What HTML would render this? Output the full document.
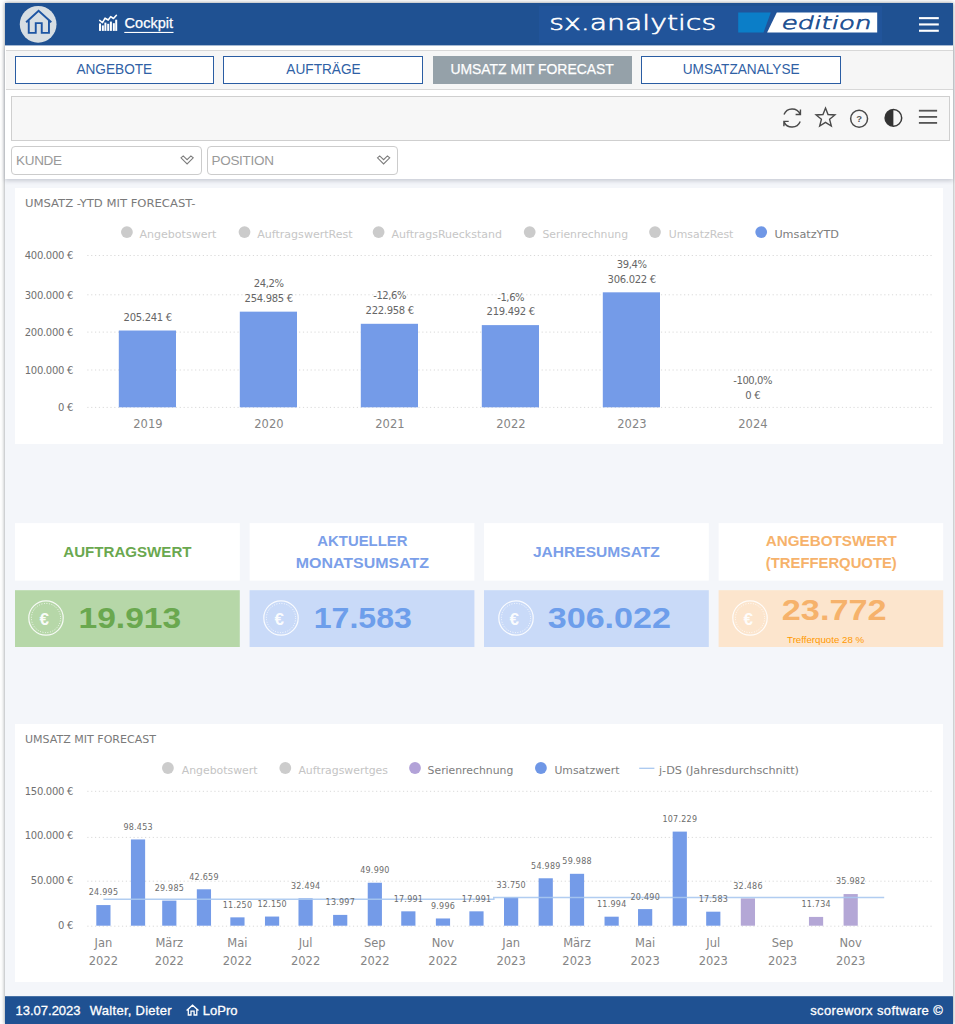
<!DOCTYPE html>
<html lang="de"><head><meta charset="utf-8"><title>sx.analytics – Cockpit</title>
<style>
*{box-sizing:border-box;margin:0;padding:0}
html,body{width:955px;height:1024px;overflow:hidden;background:#fff;font-family:"Liberation Sans",sans-serif}
#app{position:absolute;left:5px;top:3px;width:948px;height:1021px;background:#f4f6fa;box-shadow:0 0 4px 0 rgba(40,50,60,.55)}
.abs{position:absolute}
#page{position:absolute;left:0;top:0;width:955px;height:1024px}
header{position:absolute;left:5px;top:3px;width:948px;height:42px;background:#1f5192}
#top{position:absolute;left:5px;top:45px;width:948px;height:134px;background:#fff;box-shadow:0 2px 4px rgba(60,70,90,.23)}
#tabs{position:absolute;left:6px;top:50px;width:947px;height:40px;background:#f6f6f6;border-top:1px solid #d8d8d8;border-bottom:1px solid #d8d8d8}
.tab{position:absolute;top:56px;height:28px;border:1px solid #2a5da3;background:#fff;color:#2f61a5;font-size:14.5px;line-height:24.6px;text-align:center;text-decoration:none;white-space:nowrap}
.tab span{display:inline-block;transform:scaleX(.94)}
.tab.act{background:#95a1a9;border-color:#95a1a9;color:#fff}
.tab.act span{transform:scaleX(.96);-webkit-text-stroke:.25px #fff}
#tools{position:absolute;left:11px;top:96px;width:939px;height:45px;background:#f7f7f7;border:1px solid #cfcfcf}
.sel{position:absolute;top:146px;height:29px;border:1px solid #ccc;border-radius:4px;background:#fff;color:#999;font-size:13.5px;letter-spacing:-.3px;line-height:28px;padding-left:4px}
.card{position:absolute;left:15px;width:928px;background:#fff}
.chart{display:block}
.tt{position:absolute;top:523px;height:57px}
.tv{position:absolute;top:590.2px;height:56.8px}
.euro{position:absolute}
footer{position:absolute;left:5px;top:997px;width:948px;height:27px;background:#1f5192;color:#fff;font-size:13px;line-height:28.6px;-webkit-text-stroke:.3px #fff}
footer span{position:absolute;top:0;white-space:nowrap}
</style></head>
<body>
<div id="app"></div>
<div id="page">
<div id="top"></div>
<header></header>
<svg class="abs" style="left:5px;top:3px" width="948" height="43" viewBox="5 3 948 43">
<rect x="5" y="3" width="947.9" height="42.4" fill="#1f5192"/>
<rect x="539" y="6" width="343" height="37" fill="#21549a"/>
<circle cx="38.15" cy="24.3" r="18.35" fill="#d7dee3"/>
<path d="M26.1 22.3 L38.6 10.7 L51.3 22.3 M28.75 20.2 V32.85 H35.75 V23.15 H41.75 V32.85 H48.95 V20.2" fill="none" stroke="#1d55a3" stroke-width="1.9" stroke-linejoin="miter"/>
<g fill="#fff"><rect x="99" y="23.5" width="2" height="7.4"/><rect x="101.85" y="25.4" width="2" height="5.5"/><rect x="104.4" y="22.6" width="2" height="8.3"/><rect x="107.2" y="23.8" width="2" height="7.1"/><rect x="109.9" y="21.6" width="2" height="9.3"/><rect x="112.85" y="23.2" width="2" height="7.7"/><rect x="115.2" y="19.7" width="2" height="11.2"/></g>
<path d="M99.7 20.4 L102.5 22.6 L105.05 18.2 L108.2 20.05 L110.7 16.6 L113.5 18.5 L116.4 15.3" fill="none" stroke="#fff" stroke-width="1.6" stroke-linejoin="round" stroke-linecap="round"/>
<text x="124.5" y="27.6" font-family='"Liberation Sans", sans-serif' font-size="14.5" fill="#fff" stroke="#fff" stroke-width=".25" textLength="48.6" lengthAdjust="spacing">Cockpit</text>
<rect x="124.3" y="31.9" width="49.2" height="1.1" fill="#fff"/>
<text x="549.2" y="30.2" font-family='"DejaVu Sans Light", "DejaVu Sans", "Liberation Sans", sans-serif' font-weight="200" font-size="22" fill="#fff" stroke="#fff" stroke-width=".6" textLength="167" lengthAdjust="spacingAndGlyphs">sx.analytics</text>
<polygon points="738.2,12.6 770.8,12.6 763.5,32.6 738.2,32.6" fill="#0b7ec8"/>
<polygon points="776.8,12.6 877.2,12.6 877.2,32.6 767.1,32.6" fill="#fff"/>
<text x="781.6" y="29" font-family='"DejaVu Sans Light", "DejaVu Sans", "Liberation Sans", sans-serif' font-weight="200" font-size="17.6" fill="#1f5192" stroke="#1f5192" stroke-width=".7" textLength="90" lengthAdjust="spacingAndGlyphs" transform="translate(780.4,29) skewX(-14) translate(-781.6,-29)">edition</text>
<g fill="#fff"><rect x="919" y="17.1" width="19.8" height="2.1"/><rect x="919" y="23.4" width="19.8" height="2.1"/><rect x="919" y="29.7" width="19.8" height="2.1"/></g>
</svg>
<nav id="tabs"></nav>
<a class="tab" style="left:15px;width:199px"><span>ANGEBOTE</span></a>
<a class="tab" style="left:223px;width:200px"><span>AUFTRÄGE</span></a>
<a class="tab act" style="left:433px;width:199px"><span>UMSATZ MIT FORECAST</span></a>
<a class="tab" style="left:641px;width:200px"><span>UMSATZANALYSE</span></a>
<div id="tools"></div>
<svg class="abs" style="left:775px;top:100px" width="170" height="36" viewBox="775 100 170 36" fill="none" stroke="#4a4a4a" stroke-width="1.4">
<path d="M784.0 114.5 A8.8 8.8 0 0 1 800.2 114.2 M800.45 109.6 V114.45 H795.6 M800.2 121.4 A8.8 8.8 0 0 1 784.0 121.9 M783.9 126.2 V121.4 H788.7" stroke-linecap="butt"/>
<polygon points="825.50,108.10 828.03,114.52 834.92,114.94 829.59,119.33 831.32,126.01 825.50,122.30 819.68,126.01 821.41,119.33 816.08,114.94 822.97,114.52" stroke-linejoin="miter"/>
<circle cx="859.1" cy="118.8" r="8.45" stroke-width="1.5"/>
<text x="859.1" y="122.2" text-anchor="middle" font-family='"Liberation Sans", sans-serif' font-weight="bold" font-size="9.5" fill="#555" stroke="none">?</text>
<circle cx="893.4" cy="117.9" r="8.3" stroke="#3a3a3a" stroke-width="1.5"/>
<path d="M893.4 109.6 A8.3 8.3 0 0 0 893.4 126.2 Z" fill="#333" stroke="none"/>
<g fill="#555" stroke="none"><rect x="918.9" y="109.8" width="18.2" height="1.8"/><rect x="918.9" y="116" width="18.2" height="1.8"/><rect x="918.9" y="122" width="18.2" height="1.8"/></g>
</svg>
<div class="sel" style="left:11px;width:191px">KUNDE</div>
<div class="sel" style="left:206.5px;width:191.5px">POSITION</div>
<svg class="abs" style="left:170px;top:150px" width="230" height="20" viewBox="170 150 230 20"><polygon points="181.0,157.8 183.2,155.9 187.1,159.7 190.9,155.9 193.2,157.8 187.1,163.9" fill="#fff" stroke="#7c7c7c" stroke-width="1.1" stroke-linejoin="miter"/><polygon points="377.5,157.8 379.7,155.9 383.6,159.7 387.4,155.9 389.7,157.8 383.6,163.9" fill="#fff" stroke="#7c7c7c" stroke-width="1.1" stroke-linejoin="miter"/></svg>
<section class="card" style="top:188px;height:256px">
<svg class="chart" width="928" height="256" viewBox="15 188 928 256" font-family='"DejaVu Sans", "Liberation Sans", sans-serif'>
<text x="25" y="206.9" font-size="10.8" fill="#7a7a7a" textLength="170.5" lengthAdjust="spacingAndGlyphs">UMSATZ -YTD MIT FORECAST-</text>
<circle cx="126.9" cy="232.1" r="5.9" fill="#cbcbcb"/>
<text x="139.4" y="237.9" font-size="11" fill="#c6c6c6" textLength="77" lengthAdjust="spacingAndGlyphs">Angebotswert</text>
<circle cx="244.5" cy="232.1" r="5.9" fill="#cbcbcb"/>
<text x="257.2" y="237.9" font-size="11" fill="#c6c6c6" textLength="95.5" lengthAdjust="spacingAndGlyphs">AuftragswertRest</text>
<circle cx="378.6" cy="232.1" r="5.9" fill="#cbcbcb"/>
<text x="391.6" y="237.9" font-size="11" fill="#c6c6c6" textLength="110.3" lengthAdjust="spacingAndGlyphs">AuftragsRueckstand</text>
<circle cx="529.7" cy="232.1" r="5.9" fill="#cbcbcb"/>
<text x="542.5" y="237.9" font-size="11" fill="#c6c6c6" textLength="85.5" lengthAdjust="spacingAndGlyphs">Serienrechnung</text>
<circle cx="655" cy="232.1" r="5.9" fill="#cbcbcb"/>
<text x="668.8" y="237.9" font-size="11" fill="#c6c6c6" textLength="64.6" lengthAdjust="spacingAndGlyphs">UmsatzRest</text>
<circle cx="761.2" cy="232.1" r="5.9" fill="#6f97e6"/>
<text x="774.4" y="237.9" font-size="11" fill="#7d7d7d" textLength="64.6" lengthAdjust="spacingAndGlyphs">UmsatzYTD</text>
<line x1="87.3" x2="932.5" y1="407.40" y2="407.40" stroke="#d9d9d9" stroke-width="1" stroke-dasharray="1.2 2.65"/>
<text x="73" y="411.10" font-size="10" letter-spacing="-0.3" fill="#707070" text-anchor="end">0 €</text>
<line x1="87.3" x2="932.5" y1="370.00" y2="370.00" stroke="#d9d9d9" stroke-width="1" stroke-dasharray="1.2 2.65"/>
<text x="73" y="373.70" font-size="10" letter-spacing="-0.3" fill="#707070" text-anchor="end">100.000 €</text>
<line x1="87.3" x2="932.5" y1="332.10" y2="332.10" stroke="#d9d9d9" stroke-width="1" stroke-dasharray="1.2 2.65"/>
<text x="73" y="335.80" font-size="10" letter-spacing="-0.3" fill="#707070" text-anchor="end">200.000 €</text>
<line x1="87.3" x2="932.5" y1="294.80" y2="294.80" stroke="#d9d9d9" stroke-width="1" stroke-dasharray="1.2 2.65"/>
<text x="73" y="298.50" font-size="10" letter-spacing="-0.3" fill="#707070" text-anchor="end">300.000 €</text>
<line x1="87.3" x2="932.5" y1="255.50" y2="255.50" stroke="#d9d9d9" stroke-width="1" stroke-dasharray="1.2 2.65"/>
<text x="73" y="259.20" font-size="10" letter-spacing="-0.3" fill="#707070" text-anchor="end">400.000 €</text>
<rect x="118.80" y="330.51" width="57.2" height="76.79" fill="#749be8"/>
<text x="147.70" y="320.71" font-size="10" letter-spacing="-0.3" fill="#666" text-anchor="middle">205.241 €</text>
<text x="147.90" y="427.7" font-size="11.5" fill="#858585" text-anchor="middle">2019</text>
<rect x="239.80" y="311.66" width="57.2" height="95.64" fill="#749be8"/>
<text x="268.70" y="301.86" font-size="10" letter-spacing="-0.3" fill="#666" text-anchor="middle">254.985 €</text>
<text x="268.70" y="287.26" font-size="10" letter-spacing="-0.4" fill="#666" text-anchor="middle">24,2%</text>
<text x="268.90" y="427.7" font-size="11.5" fill="#858585" text-anchor="middle">2020</text>
<rect x="360.80" y="323.80" width="57.2" height="83.50" fill="#749be8"/>
<text x="389.70" y="314.00" font-size="10" letter-spacing="-0.3" fill="#666" text-anchor="middle">222.958 €</text>
<text x="389.70" y="299.40" font-size="10" letter-spacing="-0.4" fill="#666" text-anchor="middle">-12,6%</text>
<text x="389.90" y="427.7" font-size="11.5" fill="#858585" text-anchor="middle">2021</text>
<rect x="481.80" y="325.11" width="57.2" height="82.19" fill="#749be8"/>
<text x="510.70" y="315.31" font-size="10" letter-spacing="-0.3" fill="#666" text-anchor="middle">219.492 €</text>
<text x="510.70" y="300.71" font-size="10" letter-spacing="-0.4" fill="#666" text-anchor="middle">-1,6%</text>
<text x="510.90" y="427.7" font-size="11.5" fill="#858585" text-anchor="middle">2022</text>
<rect x="602.80" y="292.32" width="57.2" height="114.98" fill="#749be8"/>
<text x="631.70" y="282.52" font-size="10" letter-spacing="-0.3" fill="#666" text-anchor="middle">306.022 €</text>
<text x="631.70" y="267.92" font-size="10" letter-spacing="-0.4" fill="#666" text-anchor="middle">39,4%</text>
<text x="631.90" y="427.7" font-size="11.5" fill="#858585" text-anchor="middle">2023</text>
<text x="752.70" y="398.50" font-size="10" letter-spacing="-0.3" fill="#666" text-anchor="middle">0 €</text>
<text x="752.70" y="383.90" font-size="10" letter-spacing="-0.4" fill="#666" text-anchor="middle">-100,0%</text>
<text x="752.90" y="427.7" font-size="11.5" fill="#858585" text-anchor="middle">2024</text>
</svg>
</section>
<svg class="abs" style="left:14px;top:522px" width="228" height="127" viewBox="14 522 228 127"><rect x="15.0" y="523.1" width="224.8" height="57.5" fill="#fff"/><rect x="15.0" y="590.2" width="224.8" height="56.8" fill="#b6d7a8"/></svg>
<div class="tt" style="left:15.0px;width:224.8px;color:#6aa84f">
<svg width="224.8" height="57" viewBox="0 0 224.8 57" font-family='"Liberation Sans", sans-serif' font-weight="bold" font-size="14.3" fill="#6aa84f">
<text x="112.4" y="34.0" text-anchor="middle" textLength="128.2" lengthAdjust="spacingAndGlyphs">AUFTRAGSWERT</text>
</svg></div>
<svg class="euro" style="left:27.25px;top:599.3px" width="38" height="38" viewBox="0 0 38 38"><circle cx="19" cy="19" r="17.2" fill="none" stroke="#fff" stroke-width="1.2" opacity=".88"/><circle cx="19" cy="19" r="14.6" fill="none" stroke="#fff" stroke-width="1" stroke-dasharray="0.9 1.65" opacity=".85"/><text x="17.3" y="25.7" text-anchor="middle" font-family='"Liberation Sans", sans-serif' font-weight="bold" font-size="17" fill="#fff" opacity=".92">€</text></svg>
<svg class="abs" style="left:15.0px;top:590.5px" width="224.8" height="56.5" viewBox="15.0 590.5 224.8 56.5" font-family='"Liberation Sans", sans-serif'><text x="78.5" y="627.8" font-weight="bold" font-size="30" fill="#6aa84f" textLength="102.7" lengthAdjust="spacingAndGlyphs">19.913</text>
</svg>
<svg class="abs" style="left:248px;top:522px" width="228" height="127" viewBox="248 522 228 127"><rect x="249.6" y="523.1" width="224.8" height="57.5" fill="#fff"/><rect x="249.6" y="590.2" width="224.8" height="56.8" fill="#c9daf8"/></svg>
<div class="tt" style="left:249.6px;width:224.8px;color:#7b9fe9">
<svg width="224.8" height="57" viewBox="0 0 224.8 57" font-family='"Liberation Sans", sans-serif' font-weight="bold" font-size="14.3" fill="#7b9fe9">
<text x="112.4" y="23.4" text-anchor="middle" textLength="90.1" lengthAdjust="spacingAndGlyphs">AKTUELLER</text>
<text x="112.4" y="44.8" text-anchor="middle" textLength="133.5" lengthAdjust="spacingAndGlyphs">MONATSUMSATZ</text>
</svg></div>
<svg class="euro" style="left:261.85px;top:599.3px" width="38" height="38" viewBox="0 0 38 38"><circle cx="19" cy="19" r="17.2" fill="none" stroke="#fff" stroke-width="1.2" opacity=".88"/><circle cx="19" cy="19" r="14.6" fill="none" stroke="#fff" stroke-width="1" stroke-dasharray="0.9 1.65" opacity=".85"/><text x="17.3" y="25.7" text-anchor="middle" font-family='"Liberation Sans", sans-serif' font-weight="bold" font-size="17" fill="#fff" opacity=".92">€</text></svg>
<svg class="abs" style="left:249.6px;top:590.5px" width="224.8" height="56.5" viewBox="249.6 590.5 224.8 56.5" font-family='"Liberation Sans", sans-serif'><text x="313.3" y="627.8" font-weight="bold" font-size="30" fill="#6d9eeb" textLength="98.2" lengthAdjust="spacingAndGlyphs">17.583</text>
</svg>
<svg class="abs" style="left:483px;top:522px" width="228" height="127" viewBox="483 522 228 127"><rect x="484.0" y="523.1" width="224.8" height="57.5" fill="#fff"/><rect x="484.0" y="590.2" width="224.8" height="56.8" fill="#c9daf8"/></svg>
<div class="tt" style="left:484.0px;width:224.8px;color:#7b9fe9">
<svg width="224.8" height="57" viewBox="0 0 224.8 57" font-family='"Liberation Sans", sans-serif' font-weight="bold" font-size="14.3" fill="#7b9fe9">
<text x="112.4" y="34.0" text-anchor="middle" textLength="127" lengthAdjust="spacingAndGlyphs">JAHRESUMSATZ</text>
</svg></div>
<svg class="euro" style="left:496.54999999999995px;top:599.3px" width="38" height="38" viewBox="0 0 38 38"><circle cx="19" cy="19" r="17.2" fill="none" stroke="#fff" stroke-width="1.2" opacity=".88"/><circle cx="19" cy="19" r="14.6" fill="none" stroke="#fff" stroke-width="1" stroke-dasharray="0.9 1.65" opacity=".85"/><text x="17.3" y="25.7" text-anchor="middle" font-family='"Liberation Sans", sans-serif' font-weight="bold" font-size="17" fill="#fff" opacity=".92">€</text></svg>
<svg class="abs" style="left:484.0px;top:590.5px" width="224.8" height="56.5" viewBox="484.0 590.5 224.8 56.5" font-family='"Liberation Sans", sans-serif'><text x="547.7" y="627.8" font-weight="bold" font-size="30" fill="#6d9eeb" textLength="123.3" lengthAdjust="spacingAndGlyphs">306.022</text>
</svg>
<svg class="abs" style="left:717px;top:522px" width="228" height="127" viewBox="717 522 228 127"><rect x="718.6" y="523.1" width="224.6" height="57.5" fill="#fff"/><rect x="718.6" y="590.2" width="224.6" height="56.8" fill="#fce5cd"/></svg>
<div class="tt" style="left:718.6px;width:224.6px;color:#f6b26b">
<svg width="224.6" height="57" viewBox="0 0 224.6 57" font-family='"Liberation Sans", sans-serif' font-weight="bold" font-size="14.3" fill="#f6b26b">
<text x="112.3" y="23.4" text-anchor="middle" textLength="131" lengthAdjust="spacingAndGlyphs">ANGEBOTSWERT</text>
<text x="112.3" y="44.8" text-anchor="middle" textLength="131" lengthAdjust="spacingAndGlyphs">(TREFFERQUOTE)</text>
</svg></div>
<svg class="euro" style="left:731.25px;top:599.3px" width="38" height="38" viewBox="0 0 38 38"><circle cx="19" cy="19" r="17.2" fill="none" stroke="#fff" stroke-width="1.2" opacity=".88"/><circle cx="19" cy="19" r="14.6" fill="none" stroke="#fff" stroke-width="1" stroke-dasharray="0.9 1.65" opacity=".85"/><text x="17.3" y="25.7" text-anchor="middle" font-family='"Liberation Sans", sans-serif' font-weight="bold" font-size="17" fill="#fff" opacity=".92">€</text></svg>
<svg class="abs" style="left:718.6px;top:590.5px" width="224.6" height="56.5" viewBox="718.6 590.5 224.6 56.5" font-family='"Liberation Sans", sans-serif'><text x="781.4" y="619.4" font-weight="bold" font-size="30" fill="#f6b26b" textLength="104.8" lengthAdjust="spacingAndGlyphs">23.772</text>
<text x="786.7" y="643" font-size="9" fill="#ff9900" textLength="77" lengthAdjust="spacingAndGlyphs">Trefferquote 28 %</text>
</svg>
<section class="card" style="top:724px;height:258px">
<svg class="chart" width="928" height="258" viewBox="15 724 928 258" font-family='"DejaVu Sans", "Liberation Sans", sans-serif'>
<text x="25" y="742.9" font-size="10.8" fill="#7a7a7a" textLength="131" lengthAdjust="spacingAndGlyphs">UMSATZ MIT FORECAST</text>
<circle cx="167.9" cy="768" r="5.9" fill="#cccccc"/>
<text x="181.8" y="773.7" font-size="11" fill="#c4c4c4" textLength="75.7" lengthAdjust="spacingAndGlyphs">Angebotswert</text>
<circle cx="285.3" cy="768" r="5.9" fill="#cccccc"/>
<text x="298.4" y="773.7" font-size="11" fill="#c4c4c4" textLength="89.6" lengthAdjust="spacingAndGlyphs">Auftragswertges</text>
<circle cx="415" cy="768" r="5.9" fill="#b2a2d8"/>
<text x="427.6" y="773.7" font-size="11" fill="#7d7d7d" textLength="85.7" lengthAdjust="spacingAndGlyphs">Serienrechnung</text>
<circle cx="540.9" cy="768" r="5.9" fill="#6f97e6"/>
<text x="554.4" y="773.7" font-size="11" fill="#7d7d7d" textLength="65" lengthAdjust="spacingAndGlyphs">Umsatzwert</text>
<line x1="639.2" x2="654.4" y1="768.3" y2="768.3" stroke="#a9c8f0" stroke-width="1.3"/>
<text x="659" y="773.7" font-size="11" fill="#7d7d7d" textLength="140" lengthAdjust="spacingAndGlyphs">j-DS (Jahresdurchschnitt)</text>
<line x1="87.3" x2="932.5" y1="926.20" y2="926.20" stroke="#d9d9d9" stroke-width="1" stroke-dasharray="1.2 2.65"/>
<text x="73" y="929.15" font-size="10" letter-spacing="-0.3" fill="#707070" text-anchor="end">0 €</text>
<line x1="87.3" x2="932.5" y1="881.20" y2="881.20" stroke="#d9d9d9" stroke-width="1" stroke-dasharray="1.2 2.65"/>
<text x="73" y="883.55" font-size="10" letter-spacing="-0.3" fill="#707070" text-anchor="end">50.000 €</text>
<line x1="87.3" x2="932.5" y1="837.40" y2="837.40" stroke="#d9d9d9" stroke-width="1" stroke-dasharray="1.2 2.65"/>
<text x="73" y="838.75" font-size="10" letter-spacing="-0.3" fill="#707070" text-anchor="end">100.000 €</text>
<line x1="87.3" x2="932.5" y1="791.30" y2="791.30" stroke="#d9d9d9" stroke-width="1" stroke-dasharray="1.2 2.65"/>
<text x="73" y="795.35" font-size="10" letter-spacing="-0.3" fill="#707070" text-anchor="end">150.000 €</text>
<rect x="96.30" y="905.07" width="14.2" height="20.63" fill="#749be8"/>
<rect x="130.93" y="839.45" width="14.2" height="86.25" fill="#749be8"/>
<rect x="162.20" y="900.61" width="14.2" height="25.09" fill="#749be8"/>
<rect x="196.83" y="889.29" width="14.2" height="36.41" fill="#749be8"/>
<rect x="230.34" y="917.35" width="14.2" height="8.35" fill="#749be8"/>
<rect x="264.97" y="916.55" width="14.2" height="9.15" fill="#749be8"/>
<rect x="298.48" y="898.37" width="14.2" height="27.33" fill="#749be8"/>
<rect x="333.10" y="914.90" width="14.2" height="10.80" fill="#749be8"/>
<rect x="367.73" y="882.74" width="14.2" height="42.96" fill="#749be8"/>
<rect x="401.24" y="911.33" width="14.2" height="14.37" fill="#749be8"/>
<rect x="435.87" y="918.47" width="14.2" height="7.23" fill="#749be8"/>
<rect x="469.38" y="911.33" width="14.2" height="14.37" fill="#749be8"/>
<rect x="504.00" y="897.25" width="14.2" height="28.45" fill="#749be8"/>
<rect x="538.63" y="878.28" width="14.2" height="47.42" fill="#749be8"/>
<rect x="569.91" y="873.81" width="14.2" height="51.89" fill="#749be8"/>
<rect x="604.53" y="916.69" width="14.2" height="9.01" fill="#749be8"/>
<rect x="638.04" y="909.10" width="14.2" height="16.60" fill="#749be8"/>
<rect x="672.67" y="831.61" width="14.2" height="94.09" fill="#749be8"/>
<rect x="706.18" y="911.69" width="14.2" height="14.01" fill="#749be8"/>
<rect x="740.81" y="898.38" width="14.2" height="27.32" fill="#b4a7d6"/>
<rect x="808.95" y="916.92" width="14.2" height="8.78" fill="#b4a7d6"/>
<rect x="843.57" y="894.06" width="14.2" height="31.64" fill="#b4a7d6"/>
<path d="M103.4 899.3 H493.8 V897.5 H884.2" fill="none" stroke="#a9c8f0" stroke-width="1.6" opacity="0.9"/>
<text x="103.50" y="895.47" font-size="8" fill="#6c6c6c" text-anchor="middle" letter-spacing="0.25">24.995</text>
<text x="138.13" y="829.85" font-size="8" fill="#6c6c6c" text-anchor="middle" letter-spacing="0.25">98.453</text>
<text x="169.40" y="891.01" font-size="8" fill="#6c6c6c" text-anchor="middle" letter-spacing="0.25">29.985</text>
<text x="204.03" y="879.69" font-size="8" fill="#6c6c6c" text-anchor="middle" letter-spacing="0.25">42.659</text>
<text x="237.54" y="907.75" font-size="8" fill="#6c6c6c" text-anchor="middle" letter-spacing="0.25">11.250</text>
<text x="272.17" y="906.95" font-size="8" fill="#6c6c6c" text-anchor="middle" letter-spacing="0.25">12.150</text>
<text x="305.68" y="888.77" font-size="8" fill="#6c6c6c" text-anchor="middle" letter-spacing="0.25">32.494</text>
<text x="340.30" y="905.30" font-size="8" fill="#6c6c6c" text-anchor="middle" letter-spacing="0.25">13.997</text>
<text x="374.93" y="873.14" font-size="8" fill="#6c6c6c" text-anchor="middle" letter-spacing="0.25">49.990</text>
<text x="408.44" y="901.73" font-size="8" fill="#6c6c6c" text-anchor="middle" letter-spacing="0.25">17.991</text>
<text x="443.07" y="908.87" font-size="8" fill="#6c6c6c" text-anchor="middle" letter-spacing="0.25">9.996</text>
<text x="476.58" y="901.73" font-size="8" fill="#6c6c6c" text-anchor="middle" letter-spacing="0.25">17.991</text>
<text x="511.21" y="887.65" font-size="8" fill="#6c6c6c" text-anchor="middle" letter-spacing="0.25">33.750</text>
<text x="545.83" y="868.68" font-size="8" fill="#6c6c6c" text-anchor="middle" letter-spacing="0.25">54.989</text>
<text x="577.11" y="864.21" font-size="8" fill="#6c6c6c" text-anchor="middle" letter-spacing="0.25">59.988</text>
<text x="611.74" y="907.09" font-size="8" fill="#6c6c6c" text-anchor="middle" letter-spacing="0.25">11.994</text>
<text x="645.25" y="899.50" font-size="8" fill="#6c6c6c" text-anchor="middle" letter-spacing="0.25">20.490</text>
<text x="679.87" y="822.01" font-size="8" fill="#6c6c6c" text-anchor="middle" letter-spacing="0.25">107.229</text>
<text x="713.38" y="902.09" font-size="8" fill="#6c6c6c" text-anchor="middle" letter-spacing="0.25">17.583</text>
<text x="748.01" y="888.78" font-size="8" fill="#6c6c6c" text-anchor="middle" letter-spacing="0.25">32.486</text>
<text x="816.15" y="907.32" font-size="8" fill="#6c6c6c" text-anchor="middle" letter-spacing="0.25">11.734</text>
<text x="850.77" y="884.46" font-size="8" fill="#6c6c6c" text-anchor="middle" letter-spacing="0.25">35.982</text>
<text x="103.40" y="946.7" font-size="11.5" fill="#858585" text-anchor="middle">Jan</text>
<text x="103.40" y="964.5" font-size="11.5" fill="#858585" text-anchor="middle">2022</text>
<text x="169.30" y="946.7" font-size="11.5" fill="#858585" text-anchor="middle">März</text>
<text x="169.30" y="964.5" font-size="11.5" fill="#858585" text-anchor="middle">2022</text>
<text x="237.44" y="946.7" font-size="11.5" fill="#858585" text-anchor="middle">Mai</text>
<text x="237.44" y="964.5" font-size="11.5" fill="#858585" text-anchor="middle">2022</text>
<text x="305.58" y="946.7" font-size="11.5" fill="#858585" text-anchor="middle">Jul</text>
<text x="305.58" y="964.5" font-size="11.5" fill="#858585" text-anchor="middle">2022</text>
<text x="374.83" y="946.7" font-size="11.5" fill="#858585" text-anchor="middle">Sep</text>
<text x="374.83" y="964.5" font-size="11.5" fill="#858585" text-anchor="middle">2022</text>
<text x="442.97" y="946.7" font-size="11.5" fill="#858585" text-anchor="middle">Nov</text>
<text x="442.97" y="964.5" font-size="11.5" fill="#858585" text-anchor="middle">2022</text>
<text x="511.11" y="946.7" font-size="11.5" fill="#858585" text-anchor="middle">Jan</text>
<text x="511.11" y="964.5" font-size="11.5" fill="#858585" text-anchor="middle">2023</text>
<text x="577.01" y="946.7" font-size="11.5" fill="#858585" text-anchor="middle">März</text>
<text x="577.01" y="964.5" font-size="11.5" fill="#858585" text-anchor="middle">2023</text>
<text x="645.14" y="946.7" font-size="11.5" fill="#858585" text-anchor="middle">Mai</text>
<text x="645.14" y="964.5" font-size="11.5" fill="#858585" text-anchor="middle">2023</text>
<text x="713.28" y="946.7" font-size="11.5" fill="#858585" text-anchor="middle">Jul</text>
<text x="713.28" y="964.5" font-size="11.5" fill="#858585" text-anchor="middle">2023</text>
<text x="782.54" y="946.7" font-size="11.5" fill="#858585" text-anchor="middle">Sep</text>
<text x="782.54" y="964.5" font-size="11.5" fill="#858585" text-anchor="middle">2023</text>
<text x="850.67" y="946.7" font-size="11.5" fill="#858585" text-anchor="middle">Nov</text>
<text x="850.67" y="964.5" font-size="11.5" fill="#858585" text-anchor="middle">2023</text>
</svg>
</section>
<svg class="abs" style="left:5px;top:996px" width="948" height="2" viewBox="0 0 948 2"><rect x="0" y="0.2" width="947.9" height="1.8" fill="#1f5192"/></svg>
<footer><span style="left:10.5px">13.07.2023</span><span style="left:84.8px;letter-spacing:.27px">Walter, Dieter</span><span style="left:197.8px">LoPro</span><span style="right:9.8px;letter-spacing:.39px">scoreworx software ©</span></footer>
<svg class="abs" style="left:184px;top:1002px" width="18" height="16" viewBox="184 1002 18 16"><path d="M186.6 1010.4 L192.55 1005.2 L198.5 1010.4 M188.3 1009.6 V1015 H191 V1011.2 H194.1 V1015 H196.8 V1009.6" fill="none" stroke="#fff" stroke-width="1.3"/></svg>
</div>
</body></html>
